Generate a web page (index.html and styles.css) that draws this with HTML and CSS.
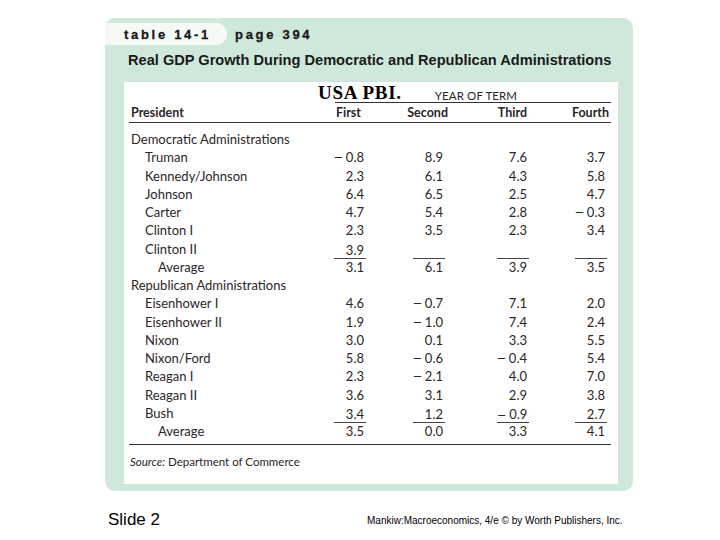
FILE: index.html
```html
<!DOCTYPE html>
<html>
<head>
<meta charset="utf-8">
<link rel="stylesheet" href="styles.css">
</head>
<body>
<div class="panel">
  <div class="tabrow">
    <div class="tab">table 14-1</div>
    <div class="page">page 394</div>
  </div>
  <div class="title">Real GDP Growth During Democratic and Republican Administrations</div>
  <div class="card">
    <div class="stamp">USA PBI.</div>
    <div class="row toprow">
      <div></div>
      <div class="yot">YEAR OF TERM</div>
    </div>
    <div class="row head">
      <div class="lab0">President</div>
      <div class="num h1">First</div>
      <div class="num h2">Second</div>
      <div class="num">Third</div>
      <div class="num h4">Fourth</div>
    </div>
    <div class="body">
      <div class="row"><div class="lab0">Democratic Administrations</div></div>
      <div class="row"><div class="lab1">Truman</div><div class="num"><span class="m">−</span>0.8</div><div class="num">8.9</div><div class="num">7.6</div><div class="num">3.7</div></div>
      <div class="row"><div class="lab1">Kennedy/Johnson</div><div class="num">2.3</div><div class="num">6.1</div><div class="num">4.3</div><div class="num">5.8</div></div>
      <div class="row"><div class="lab1">Johnson</div><div class="num">6.4</div><div class="num">6.5</div><div class="num">2.5</div><div class="num">4.7</div></div>
      <div class="row"><div class="lab1">Carter</div><div class="num">4.7</div><div class="num">5.4</div><div class="num">2.8</div><div class="num"><span class="m">−</span>0.3</div></div>
      <div class="row"><div class="lab1">Clinton I</div><div class="num">2.3</div><div class="num">3.5</div><div class="num">2.3</div><div class="num">3.4</div></div>
      <div class="row"><div class="lab1">Clinton II</div><div class="num"><span class="u">3.9</span></div><div class="num"><span class="u"></span></div><div class="num"><span class="u"></span></div><div class="num"><span class="u"></span></div></div>
      <div class="row"><div class="lab2">Average</div><div class="num">3.1</div><div class="num">6.1</div><div class="num">3.9</div><div class="num">3.5</div></div>
      <div class="row"><div class="lab0">Republican Administrations</div></div>
      <div class="row"><div class="lab1">Eisenhower I</div><div class="num">4.6</div><div class="num"><span class="m">−</span>0.7</div><div class="num">7.1</div><div class="num">2.0</div></div>
      <div class="row"><div class="lab1">Eisenhower II</div><div class="num">1.9</div><div class="num"><span class="m">−</span>1.0</div><div class="num">7.4</div><div class="num">2.4</div></div>
      <div class="row"><div class="lab1">Nixon</div><div class="num">3.0</div><div class="num">0.1</div><div class="num">3.3</div><div class="num">5.5</div></div>
      <div class="row"><div class="lab1">Nixon/Ford</div><div class="num">5.8</div><div class="num"><span class="m">−</span>0.6</div><div class="num"><span class="m">−</span>0.4</div><div class="num">5.4</div></div>
      <div class="row"><div class="lab1">Reagan I</div><div class="num">2.3</div><div class="num"><span class="m">−</span>2.1</div><div class="num">4.0</div><div class="num">7.0</div></div>
      <div class="row"><div class="lab1">Reagan II</div><div class="num">3.6</div><div class="num">3.1</div><div class="num">2.9</div><div class="num">3.8</div></div>
      <div class="row"><div class="lab1">Bush</div><div class="num"><span class="u">3.4</span></div><div class="num"><span class="u">1.2</span></div><div class="num"><span class="u"><span class="m">−</span>0.9</span></div><div class="num"><span class="u">2.7</span></div></div>
      <div class="row"><div class="lab2">Average</div><div class="num">3.5</div><div class="num">0.0</div><div class="num">3.3</div><div class="num">4.1</div></div>
    </div>
    <div class="source"><i>Source:</i> Department of Commerce</div>
  </div>
</div>
<div class="footer">
  <div class="slide">Slide 2</div>
  <div class="copy">Mankiw:Macroeconomics, 4/e © by Worth Publishers, Inc.</div>
</div>
</body>
</html>
```

FILE: styles.css
```css
html, body {
  margin: 0;
  padding: 0;
  background: #ffffff;
}
body {
  width: 720px;
  height: 540px;
  overflow: hidden;
  font-family: Lato, "Open Sans", sans-serif;
  color: #2a2627;
}
.panel {
  margin: 18px 0 0 105px;
  width: 528px;
  height: 473px;
  box-sizing: border-box;
  padding-top: 5px;
  background: #cee8db;
  border-radius: 10px;
}
.tabrow {
  display: flex;
  align-items: center;
  height: 22px;
}
.tab, .page {
  font-family: "Liberation Sans", Arial, sans-serif;
  font-weight: 900;
  font-size: 13px;
  letter-spacing: 2.7px;
  color: #1a1a1a;
  -webkit-text-stroke: 0.3px #1a1a1a;
}
.tab {
  width: 122px;
  height: 22px;
  box-sizing: border-box;
  padding-left: 19px;
  background: #f5faf7;
  border-radius: 0 11px 11px 0;
  display: flex;
  align-items: center;
}
.page {
  margin-left: 8px;
}
.title {
  margin: 7px 0 0 23px;
  height: 16px;
  line-height: 16px;
  font-family: "Liberation Sans", Arial, sans-serif;
  font-weight: bold;
  font-size: 14.6px;
  color: #1a1a1a;
}
.card {
  position: relative;
  margin: 14px 0 0 19px;
  width: 494px;
  height: 402px;
  box-sizing: border-box;
  padding: 0 7px 0 5px;
  background: #ffffff;
}
.stamp {
  position: absolute;
  left: 194px;
  top: 1px;
  font-family: "Liberation Serif", "Times New Roman", serif;
  font-weight: bold;
  font-size: 19px;
  letter-spacing: 0.7px;
  line-height: 20px;
  color: #000;
}
.row {
  display: grid;
  grid-template-columns: 175px 60px 79px 84px 78px;
  height: 18.25px;
  line-height: 18.25px;
  font-size: 13px;
}
.toprow {
  height: 21px;
}
.yot {
  grid-column: 2 / 6;
  margin-left: 31px;
  margin-right: -6px;
  border-bottom: 1px solid #333;
  text-align: center;
  font-size: 11.5px;
  line-height: 13px;
  padding-top: 7px;
  padding-left: 6px;
  letter-spacing: 0.1px;
}
.head {
  height: 19px;
  line-height: 19px;
  font-weight: bold;
  font-size: 12.5px;
  border-bottom: 1px solid #333;
}
.h1 {
  padding-right: 3px;
}
.h2 {
  margin-right: -5px;
}
.h4 {
  margin-right: -4px;
}
.body {
  padding-top: 7px;
}
.lab0 { padding-left: 2px; white-space: nowrap; }
.lab1 { padding-left: 16px; white-space: nowrap; }
.lab2 { padding-left: 29px; white-space: nowrap; }
.num {
  display: flex;
  justify-content: flex-end;
  align-items: center;
  white-space: nowrap;
}
.m {
  font-family: "DejaVu Sans", sans-serif;
  font-size: 11.5px;
  margin-right: 2.5px;
}
.u {
  display: block;
  width: 30px;
  height: 15px;
  line-height: 15px;
  text-align: right;
  border-bottom: 1px solid #444;
  margin-top: 3px;
  padding-right: 2px;
  margin-right: -2px;
}
.source {
  margin-top: 4px;
  border-top: 1px solid #333;
  padding-top: 8px;
  font-size: 11.5px;
  line-height: 17px;
  padding-left: 1px;
}
.footer {
  display: flex;
  align-items: center;
  margin-top: 19px;
  padding-left: 108px;
  height: 20px;
}
.slide {
  width: 259px;
  font-family: "Liberation Sans", Arial, sans-serif;
  font-size: 17px;
  color: #000;
}
.copy {
  font-family: "Liberation Sans", Arial, sans-serif;
  font-size: 10px;
  color: #000;
}
```
